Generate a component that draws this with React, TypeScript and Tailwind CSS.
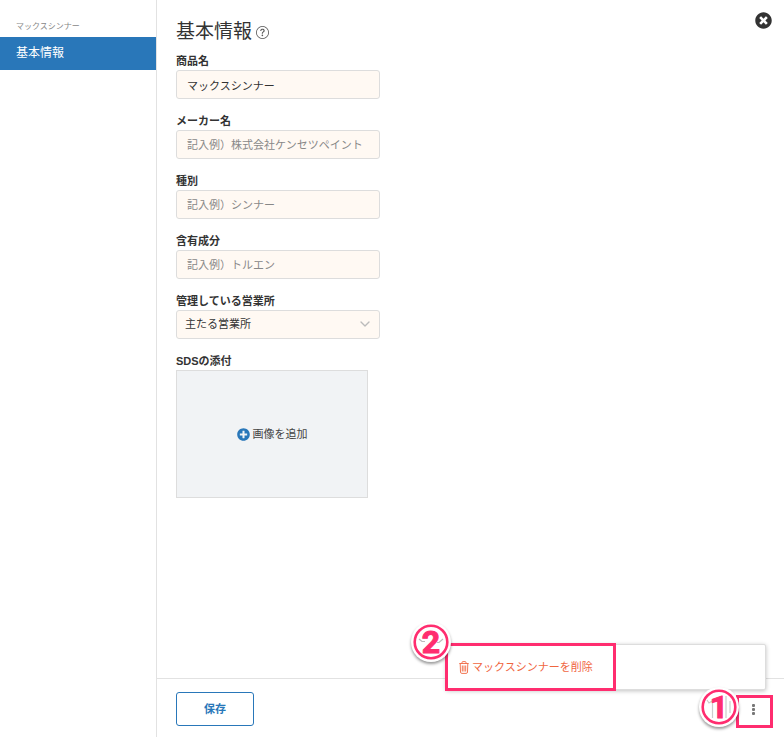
import { BsQuestionCircle } from "react-icons/bs"
import { FaPlusCircle, FaTimesCircle } from "react-icons/fa"
import { FiChevronDown } from "react-icons/fi"

const fields = [
  { id: "name", label: "商品名", value: "マックスシンナー", placeholder: "" },
  { id: "maker", label: "メーカー名", value: "", placeholder: "記入例）株式会社ケンセツペイント" },
  { id: "type", label: "種別", value: "", placeholder: "記入例）シンナー" },
  { id: "component", label: "含有成分", value: "", placeholder: "記入例）トルエン" },
]

const labelClass = "block h-[17px] leading-[17px] font-bold text-[#333]"
const controlClass =
  "block w-full h-[29px] rounded-[3px] border border-[#ddd] bg-[#fff9f3] outline-none"

function TrashIcon() {
  return (
    <svg width="10" height="13" viewBox="0 0 10 13" fill="none" stroke="currentColor" strokeWidth="0.9">
      <path d="M0.3 2.5h9.4M3 2.4V1.5Q3 0.6 4 0.6h2Q7 0.6 7 1.5v0.9" />
      <path d="M1.2 2.6l0.3 8.4Q1.6 12.4 2.8 12.4h4.4Q8.4 12.4 8.5 11l0.3-8.4" />
      <path d="M3.3 4.5v6M5 4.5v6M6.7 4.5v6" />
    </svg>
  )
}

function StepBadge({ number }: { number: string }) {
  return (
    <span className="relative flex size-10 items-center justify-center rounded-full bg-white shadow-[0_2px_3px_rgba(0,0,0,0.4)]">
      <svg className="absolute inset-0" width="40" height="40" viewBox="0 0 40 40" fill="none">
        <circle cx="20" cy="20" r="16.3" stroke="#ff2d6f" strokeWidth="2.6" />
        {number === "2" ? (
          <path d="M8 17l3 2.5h3M32 17l-4 3.5h-2" stroke="#bbb" strokeWidth="1.2" />
        ) : (
          <path d="M8 13l2 3 3-2M13.5 16v15M27 9v22M31 14v12" stroke="#ccc" strokeWidth="1.2" />
        )}
      </svg>
      <span className="relative font-[Roboto,sans-serif] text-[32px] leading-10 font-bold text-[#ff2d6f] [-webkit-text-stroke:1px_#ff2d6f]">
        {number}
      </span>
    </span>
  )
}

function Sidebar() {
  return (
    <nav className="w-[157px] shrink-0 border-r border-[#e2e2e2] pt-5">
      <p className="h-[17px] px-4 text-[8px] leading-[14px] text-[#888]">マックスシンナー</p>
      <a href="#basic" className="block h-[33px] bg-[#2977b9] px-4 text-[12px] leading-8 text-white">
        基本情報
      </a>
    </nav>
  )
}

function Footer() {
  return (
    <footer className="relative flex h-[59px] items-center justify-between border-t border-[#e2e2e2] px-[19px] pt-[2px]">
      <button
        type="submit"
        className="h-[34px] w-[78px] rounded-[3px] border border-[#2977b9] bg-white font-bold text-[#2977b9]"
      >
        保存
      </button>

      <div className="relative z-10">
        <button type="button" aria-label="メニュー" className="flex size-6 flex-col items-center justify-center gap-px">
          <span className="size-[3px] rounded-[1px] bg-[#777]" />
          <span className="size-[3px] rounded-[1px] bg-[#777]" />
          <span className="size-[3px] rounded-[1px] bg-[#777]" />
        </button>
        <span className="pointer-events-none absolute -top-[2px] -right-2 h-[33px] w-[37px] border-[3px] border-[#ff2d6f]" />
        <span className="pointer-events-none absolute -top-[10px] right-[26px]">
          <StepBadge number="1" />
        </span>
      </div>

      <div className="absolute right-[18px] bottom-[47px] h-[46px] w-80 rounded-[2px] border border-[#ddd] bg-white shadow-[0_1px_4px_rgba(0,0,0,0.25)]">
        <button type="button" className="flex h-full items-center gap-[3px] px-3 text-[#f0663f]">
          <TrashIcon />
          マックスシンナーを削除
        </button>
        <span className="pointer-events-none absolute -top-[2px] -left-[2px] h-12 w-[171px] border-[3px] border-[#ff2d6f]" />
        <span className="pointer-events-none absolute -top-[23px] -left-9">
          <StepBadge number="2" />
        </span>
      </div>
    </footer>
  )
}

export default function App() {
  return (
    <div className="flex min-h-screen bg-white font-['Liberation_Sans','Noto_Sans_CJK_JP',sans-serif] text-[11px] text-[#333]">
      <Sidebar />
      <div className="flex min-w-0 flex-1 flex-col">
        <main className="relative flex-1 px-[19px] pt-[18px]">
          <button type="button" aria-label="閉じる" className="absolute top-3 right-3 text-[#333]">
            <FaTimesCircle size={17} />
          </button>

          <h1 className="flex items-center gap-1 text-[19px] leading-7">
            基本情報
            <BsQuestionCircle size={13} className="text-[#555]" />
          </h1>

          <form className="mt-[7px] flex w-[204px] flex-col gap-[14px]">
            {fields.map((field) => (
              <div key={field.id}>
                <label htmlFor={field.id} className={labelClass}>
                  {field.label}
                </label>
                <input
                  id={field.id}
                  type="text"
                  defaultValue={field.value}
                  placeholder={field.placeholder}
                  className={`${controlClass} px-[10px] placeholder:text-[#888]`}
                />
              </div>
            ))}

            <div>
              <label htmlFor="office" className={labelClass}>
                管理している営業所
              </label>
              <div className="relative">
                <select id="office" className={`${controlClass} appearance-none px-2`}>
                  <option>主たる営業所</option>
                </select>
                <FiChevronDown
                  size={16}
                  className="pointer-events-none absolute top-[6px] right-[7px] text-[#bbb]"
                />
              </div>
            </div>

            <div>
              <span className={labelClass}>SDSの添付</span>
              <button
                type="button"
                className="flex h-32 w-48 items-center justify-center gap-[3px] border border-[#ddd] bg-[#f1f3f5] text-[#444]"
              >
                <FaPlusCircle size={13} className="text-[#2977b9]" />
                画像を追加
              </button>
            </div>
          </form>
        </main>
        <Footer />
      </div>
    </div>
  )
}
